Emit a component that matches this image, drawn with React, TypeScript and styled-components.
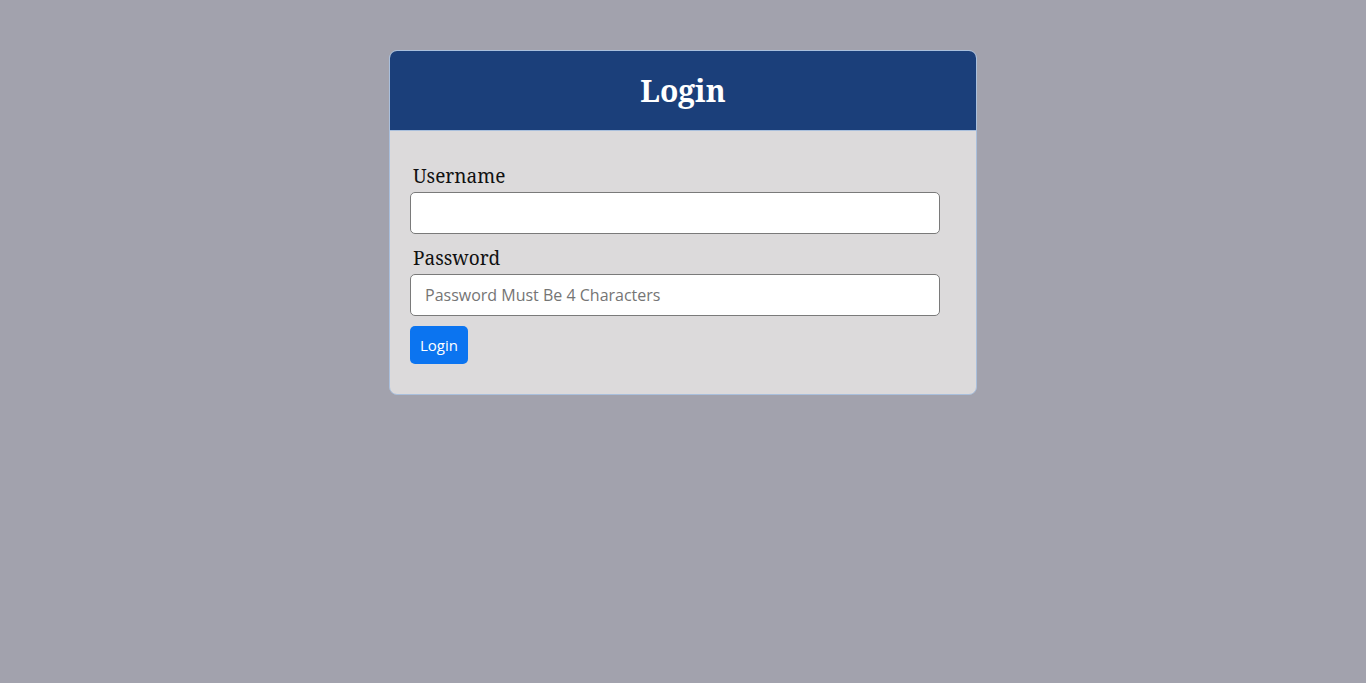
import React from "react";
import styled, { createGlobalStyle } from "styled-components";

const GlobalStyle = createGlobalStyle`
  body {
    margin: 0;
    background: #a2a2ad;
    font-family: "Noto Serif", "DejaVu Serif", serif;
  }
`;

const Page = styled.div`
  min-height: 683px;
  display: flex;
  justify-content: center;
  align-items: flex-start;
  padding-top: 50px;
  box-sizing: border-box;
`;

const Card = styled.div`
  width: 588px;
  border: 1px solid #a9bfdc;
  border-radius: 8px;
  overflow: hidden;
  background: #dcdadb;
  box-sizing: border-box;
`;

const CardHeader = styled.div`
  height: 80px;
  background: #1b3f7a;
  border-bottom: 1px solid #a9bfdc;
  display: flex;
  align-items: center;
  justify-content: center;
  box-sizing: border-box;
`;

const Title = styled.h1`
  margin: 0;
  color: #ffffff;
  font-size: 30px;
  font-weight: 700;
`;

const Form = styled.form`
  padding: 31px 36px 30px 20px;
  display: flex;
  flex-direction: column;
`;

const Label = styled.label`
  font-size: 19px;
  color: #111;
  margin: 0 0 2px 3px;
  line-height: 28px;
`;

const Input = styled.input`
  width: 530px;
  height: 42px;
  box-sizing: border-box;
  border: 1px solid #7a7a7a;
  border-radius: 5px;
  background: #fff;
  padding: 0 14px;
  font-family: "Open Sans", "Noto Sans", sans-serif;
  font-size: 16px;
  margin-bottom: 10px;

  &::placeholder {
    color: #757575;
  }
`;

const Button = styled.button`
  align-self: flex-start;
  height: 38px;
  padding: 0 10px;
  border: none;
  border-radius: 5px;
  background: #0b74f0;
  color: #fff;
  font-family: "Open Sans", "Noto Sans", sans-serif;
  font-size: 15px;
`;

export default function App() {
  return (
    <>
      <GlobalStyle />
      <Page>
        <Card>
          <CardHeader>
            <Title>Login</Title>
          </CardHeader>
          <Form onSubmit={(e) => e.preventDefault()}>
            <Label htmlFor="username">Username</Label>
            <Input id="username" type="text" />
            <Label htmlFor="password">Password</Label>
            <Input id="password" type="password" placeholder="Password Must Be 4 Characters" />
            <Button type="submit">Login</Button>
          </Form>
        </Card>
      </Page>
    </>
  );
}
